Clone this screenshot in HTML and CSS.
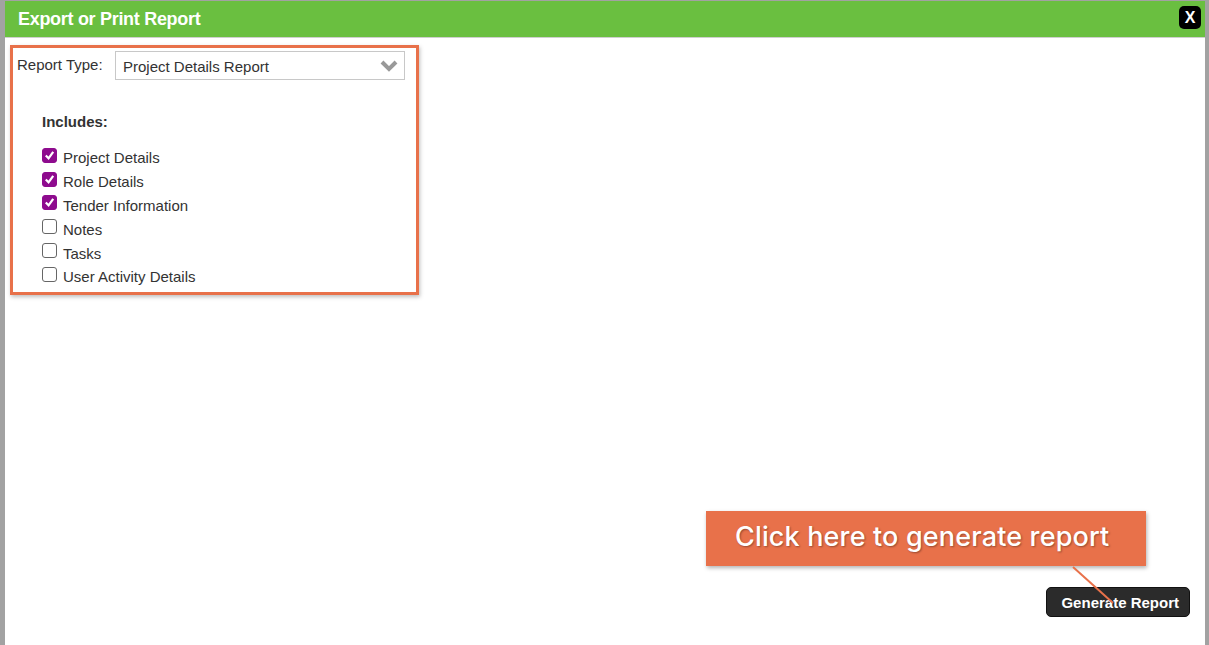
FILE: index.html
```html
<!DOCTYPE html>
<html>
<head>
    <title>Export or Print Report</title>
    <link rel="stylesheet" href="styles.css">
</head>
<body>
    <div class="modal">
        <div class="modal-header">
            <h1>Export or Print Report</h1>
            <button class="close-btn">X</button>
        </div>
        <div class="modal-body">
            <div class="highlight">
                <div class="form-row">
                    <label for="reportType">Report Type:</label>
                    <div class="select-wrap">
                        <select id="reportType">
                            <option>Project Details Report</option>
                        </select>
                        <svg class="chevron" width="18" height="12" viewBox="0 0 18 12">
                            <path d="M2 2 L9 9 L16 2" fill="none" stroke="#999" stroke-width="4"/>
                        </svg>
                    </div>
                </div>
                <div class="includes">
                    <h3>Includes:</h3>
                    <label class="check"><input type="checkbox" checked> Project Details</label>
                    <label class="check"><input type="checkbox" checked> Role Details</label>
                    <label class="check"><input type="checkbox" checked> Tender Information</label>
                    <label class="check"><input type="checkbox"> Notes</label>
                    <label class="check"><input type="checkbox"> Tasks</label>
                    <label class="check"><input type="checkbox"> User Activity Details</label>
                </div>
            </div>
        </div>
        <div class="modal-footer">
            <button class="generate-btn">Generate Report</button>
        </div>

        <!-- annotation -->
        <div class="callout">Click here to generate report</div>
        <svg class="callout-line" width="60" height="50" viewBox="0 0 60 50">
            <line x1="2" y1="2" x2="42" y2="38" stroke="#e8714a" stroke-width="2"/>
        </svg>
    </div>
</body>
</html>
```

FILE: styles.css
```css
body {
    margin: 0;
    padding: 0;
    background-color: #a2a2a2;
    font-family: Arial, "Liberation Sans", sans-serif;
    height: 645px;
    overflow: hidden;
}

.modal {
    position: relative;
    margin: 1px 4px 0 5px;
    height: 644px;
    background-color: #fff;
    display: flex;
    flex-direction: column;
}

.modal-header {
    background-color: #6abf40;
    height: 36px;
    border-bottom: 1px solid #cfcfcf;
    display: flex;
    align-items: center;
    justify-content: space-between;
    padding: 0 4px 0 13px;
}

.modal-header h1 {
    margin: 0;
    color: #fff;
    font-size: 18px;
    font-weight: bold;
    letter-spacing: -0.3px;
}

.close-btn {
    width: 22px;
    height: 23px;
    background-color: #000;
    color: #fff;
    border: none;
    border-radius: 5px;
    font-family: Arial, "Liberation Sans", sans-serif;
    font-weight: bold;
    font-size: 16px;
    padding: 0;
    margin-top: -3px;
}

.modal-body {
    flex: 1;
    padding: 7px 0 0 5px;
}

.highlight {
    width: 403px;
    height: 244px;
    border: 3px solid #e8714a;
    box-shadow: 1px 2px 4px rgba(0, 0, 0, 0.25);
}

.form-row {
    display: flex;
    align-items: flex-start;
    padding: 3px 0 0 4px;
}

.form-row label {
    color: #333;
    font-size: 15px;
    margin-top: 5px;
    width: 98px;
}

.select-wrap {
    position: relative;
}

.select-wrap select {
    appearance: none;
    width: 290px;
    height: 29px;
    border: 1px solid #c8c8c8;
    background: #fff;
    color: #333;
    font-family: Arial, "Liberation Sans", sans-serif;
    font-size: 15px;
    padding: 1px 7px 0;
}

.chevron {
    position: absolute;
    right: 7px;
    top: 9px;
}

.includes {
    padding: 33px 0 0 29px;
    display: flex;
    flex-direction: column;
}

.includes h3 {
    margin: 0 0 16px 0;
    font-size: 15px;
    color: #333;
}

.check {
    display: flex;
    align-items: center;
    height: 23.8px;
    font-size: 15px;
    color: #333;
}

.check input {
    appearance: none;
    width: 15px;
    height: 15px;
    margin: -5px 6px 0 0;
    border: 1px solid #666;
    border-radius: 3px;
    background: #fff;
}

.check input:checked {
    border-color: #8e0b8e;
    background: #8e0b8e url("data:image/svg+xml,%3Csvg xmlns='http://www.w3.org/2000/svg' viewBox='0 0 14 14'%3E%3Cpath d='M3 7 L6 10 L11 3' fill='none' stroke='white' stroke-width='2.4'/%3E%3C/svg%3E") center / 13px no-repeat;
}

.modal-footer {
    display: flex;
    justify-content: flex-end;
    padding: 0 15px 28px 0;
}

.generate-btn {
    background-color: #2b2b2b;
    color: #fff;
    border: 1px solid #111;
    border-radius: 5px;
    height: 30px;
    padding: 0 10px 0 14px;
    font-family: Arial, "Liberation Sans", sans-serif;
    font-weight: bold;
    font-size: 15px;
}

.callout {
    position: absolute;
    left: 701px;
    top: 510px;
    width: 440px;
    height: 55px;
    background-color: #e8714a;
    color: #fff;
    font-family: Inter, "Noto Sans", sans-serif;
    font-size: 27px;
    font-weight: 500;
    letter-spacing: 0.15px;
    line-height: 52px;
    padding-left: 29px;
    box-sizing: border-box;
    text-shadow: 1px 1px 2px rgba(0, 0, 0, 0.35);
    box-shadow: 1px 2px 4px rgba(0, 0, 0, 0.3);
}

.callout-line {
    position: absolute;
    left: 1066px;
    top: 564px;
}
```
